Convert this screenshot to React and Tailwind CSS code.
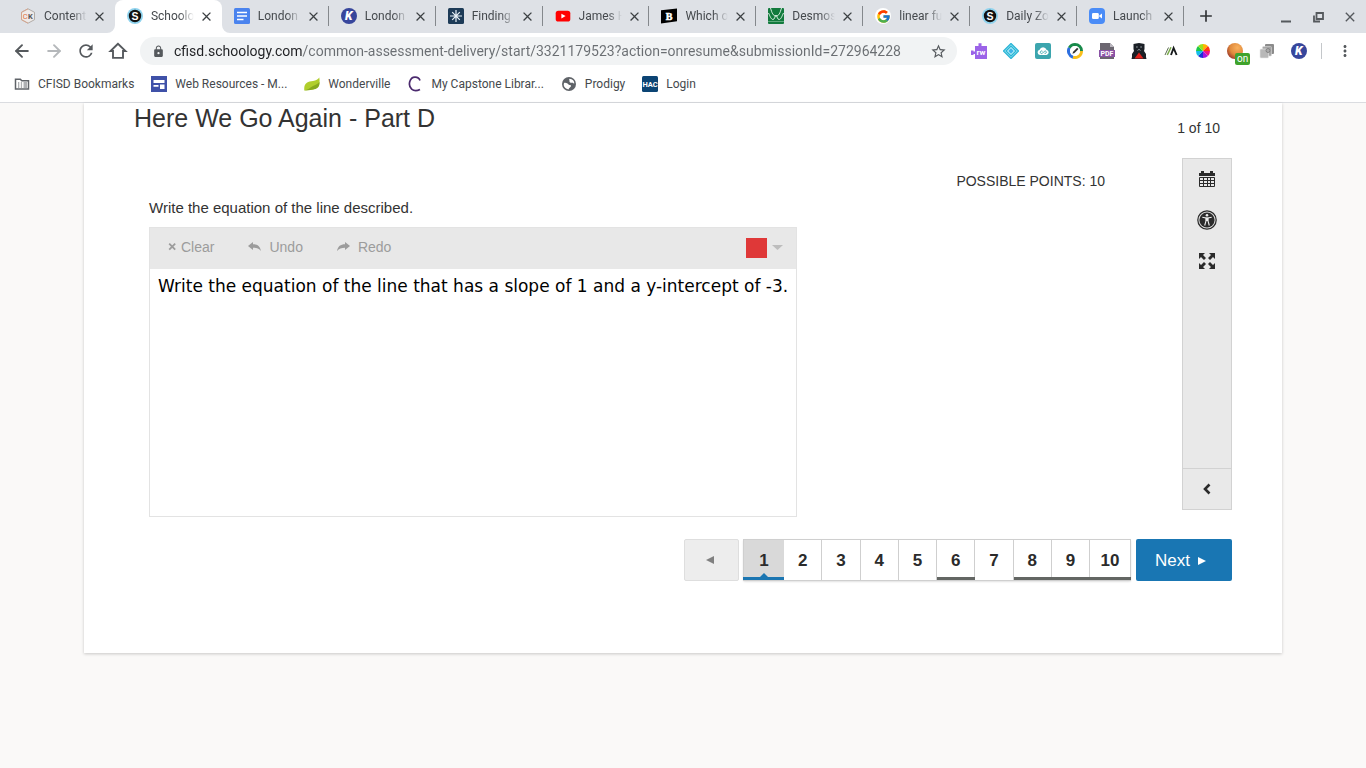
import React from "react";
import { ArrowLeft, ArrowRight } from "lucide-react";
import { MdRefresh, MdLock, MdStarBorder, MdClose, MdAdd, MdMoreVert } from "react-icons/md";
import { FcGoogle } from "react-icons/fc";

const SANS = "Roboto, 'Liberation Sans', sans-serif";

function Glyph({ size = 16, children }) {
  return (
    <svg width={size} height={size} viewBox="0 0 16 16" className="block shrink-0" aria-hidden="true">
      {children}
    </svg>
  );
}

const Ck = () => (
  <Glyph>
    <path d="M8 .8 14.500 4.300v7.400L8 15.200 1.500 11.700V4.300z" fill="#eeeae8" stroke="#a39c97" strokeWidth=".8" />
    <path d="M8 15.200 1.500 11.700V4.300L8 .8" fill="none" stroke="#e0a184" strokeWidth=".8" />
    <text x="2.800" y="10.800" fontSize="7.500" fontFamily={SANS} fill="#e2703a">C</text>
    <text x="8" y="10.800" fontSize="7.500" fontWeight="700" fontFamily={SANS} fill="#555">K</text>
  </Glyph>
);

const SchoologyMark = () => (
  <Glyph>
    <circle cx="8" cy="8" r="8" fill="#8fd3ee" />
    <circle cx="8" cy="8" r="6.200" fill="#111" />
    <text x="8" y="11.700" fontSize="10.500" fontWeight="700" textAnchor="middle" fontFamily="Liberation Sans, sans-serif" fill="#fff">S</text>
  </Glyph>
);

const DocsMark = () => (
  <Glyph>
    <rect width="16" height="16" rx="1.500" fill="#4a83ee" />
    <path d="M3 4.500h10M3 8h10M3 11.500h6.500" stroke="#fff" strokeWidth="1.600" />
  </Glyph>
);

const KamiArt = () => (
  <>
    <circle cx="8" cy="8" r="8" fill="#37469c" />
    <text x="7.800" y="12.200" fontSize="12" fontWeight="900" fontStyle="italic" textAnchor="middle" fontFamily={SANS} fill="#fff">K</text>
  </>
);

const KamiMark = () => <Glyph><KamiArt /></Glyph>;

const AsteriskMark = () => (
  <Glyph>
    <rect width="16" height="16" rx="1.500" fill="#1d3b57" />
    <path d="M8 2v12M2 8h12M4.200 4.200l7.600 7.600M11.800 4.200l-7.600 7.600" stroke="#e8f1f7" strokeWidth="1.200" />
  </Glyph>
);

const YoutubeMark = () => (
  <Glyph>
    <rect x=".7" y="2.700" width="14.600" height="10.800" rx="2.600" fill="#f00" />
    <path d="M6.400 5.700v4.800l4.200-2.400z" fill="#fff" />
  </Glyph>
);

const BrainlyMark = () => (
  <Glyph>
    <path d="M0 2.200 16 .5v12.700L0 15.500z" fill="#000" />
    <text x="8" y="11.800" fontSize="10" fontWeight="700" textAnchor="middle" fontFamily="Liberation Serif, serif" fill="#fff" stroke="#fff" strokeWidth=".5">B</text>
  </Glyph>
);

const DesmosMark = () => (
  <Glyph>
    <rect width="16" height="16" rx="1" fill="#127a3d" />
    <path d="M.5 5C2 8 3 11.500 5 11.500S7 7 8 7s1 4.500 3 4.500S14 8 15.500 5M2.500 0C4 5 5 8 8 8s4-3 5.500-8" fill="none" stroke="#d9f0e1" strokeWidth="1" />
    <path d="M0 13.500h16" stroke="#7fbf98" strokeWidth=".7" />
  </Glyph>
);

const GoogleMark = () => (
  <span className="flex size-4 items-center justify-center rounded-full bg-white"><FcGoogle size={15} /></span>
);

const ZoomMark = () => (
  <Glyph>
    <rect width="16" height="16" rx="4" fill="#4a8cf7" />
    <rect x="3" y="5" width="6.800" height="6" rx="1.300" fill="#fff" />
    <path d="m10.300 7.400 2.700-2v5.200l-2.700-2z" fill="#fff" />
  </Glyph>
);

const TABS = [
  { title: "Content", Icon: Ck },
  { title: "Schoology", Icon: SchoologyMark, active: true },
  { title: "London", Icon: DocsMark },
  { title: "London", Icon: KamiMark },
  { title: "Finding", Icon: AsteriskMark },
  { title: "James H", Icon: YoutubeMark },
  { title: "Which of", Icon: BrainlyMark },
  { title: "Desmos", Icon: DesmosMark },
  { title: "linear fun", Icon: GoogleMark },
  { title: "Daily Zoom", Icon: SchoologyMark },
  { title: "Launch", Icon: ZoomMark },
];

function Tab({ title, Icon, active, divider }) {
  return (
    <div className={active ? "relative flex min-w-0 flex-1 items-center rounded-t-lg bg-white pb-px pl-3" : "relative flex min-w-0 flex-1 items-center pb-px pl-3"}>
      <Icon />
      <button
        type="button"
        role="tab"
        aria-selected={!!active}
        className="ml-2 w-[43px] overflow-hidden text-left text-[12px] leading-5 whitespace-nowrap text-[#45494d] [mask-image:linear-gradient(90deg,#000_65%,transparent)]"
      >
        {title}
      </button>
      <button type="button" aria-label={`Close ${title}`} className="ml-[5px] text-[#3c4043]">
        <MdClose size={15} />
      </button>
      {divider && <span className="absolute top-[6px] right-0 h-5 w-px bg-[#84888c]" />}
      {active && (
        <>
          <svg width="8" height="8" viewBox="0 0 8 8" className="absolute bottom-0 -left-2" aria-hidden="true"><path d="M8 0v8H0a8 8 0 0 0 8-8z" fill="#fff" /></svg>
          <svg width="8" height="8" viewBox="0 0 8 8" className="absolute -right-2 bottom-0" aria-hidden="true"><path d="M0 0v8h8a8 8 0 0 1-8-8z" fill="#fff" /></svg>
        </>
      )}
    </div>
  );
}

function TabStrip() {
  return (
    <div className="flex h-[33px] bg-[#dee1e6] pl-2">
      <div role="tablist" className="flex max-w-[1176px] min-w-0 flex-1">
        {TABS.map((t, i) => <Tab key={i} {...t} divider={i > 1} />)}
      </div>
      <button type="button" aria-label="New tab" className="ml-3 pb-px text-[#303336]"><MdAdd size={20} /></button>
      <div className="ml-auto flex items-center gap-4 pr-2 text-[#55595d]">
        <button type="button" aria-label="Minimize">
          <Glyph><path d="M3 12.500h10" stroke="currentColor" strokeWidth="2" /></Glyph>
        </button>
        <button type="button" aria-label="Restore">
          <Glyph><path d="M6.500 4h6.500v6H6.500zM4 6.500v6h6" fill="none" stroke="currentColor" strokeWidth="1.800" /></Glyph>
        </button>
        <button type="button" aria-label="Close window"><MdClose size={16} /></button>
      </div>
    </div>
  );
}

const EXTENSIONS = [
  { name: "Read&Write", art: (
    <>
      <path d="M4 3h3.500V.3h3V3H16v13H4v-5H2.500v1H0V7.500h2.500v1H4z" fill="#9b63e8" />
      <text x="10" y="12" fontSize="8" fontWeight="700" textAnchor="middle" fontFamily={SANS} fill="#fff">rw</text>
    </>
  ) },
  { name: "Diamond", art: (
    <>
      <path d="m8 .5 7.500 7.500L8 15.500.5 8z" fill="#b8f0f8" stroke="#2bb5d6" strokeWidth="1.300" strokeLinejoin="round" />
      <path d="m8 3 5 5-5 5-5-5z" fill="none" stroke="#2bb5d6" strokeWidth="1.300" />
      <path d="m8 5.300 2.700 2.700L8 10.700 5.300 8z" fill="#3fb4e8" />
    </>
  ) },
  { name: "Cloud", art: (
    <>
      <rect width="16" height="16" rx="2" fill="#3ca5ae" />
      <path d="M5 12a2.700 2.700 0 0 1-.4-5.300 3.600 3.600 0 0 1 6.900 0A2.700 2.700 0 0 1 11.500 12z" fill="#fff" />
      <path d="M7.500 8.300a1.300 1.300 0 1 0 0 1.900l2-2a1.200 1.200 0 1 1 0 2" fill="none" stroke="#3ca5ae" strokeWidth=".9" />
    </>
  ) },
  { name: "Compass", art: (
    <>
      <path d="M8 1.500A6.500 6.500 0 0 1 14.500 8" fill="none" stroke="#188a4a" strokeWidth="3" />
      <path d="M14.500 8A6.500 6.500 0 0 1 6 14.200" fill="none" stroke="#f9bf1c" strokeWidth="3" />
      <path d="M6 14.200A6.500 6.500 0 0 1 2.400 4.700" fill="none" stroke="#2d6fe0" strokeWidth="3" />
      <path d="M2.400 4.700A6.500 6.500 0 0 1 8 1.500" fill="none" stroke="#188a4a" strokeWidth="3" />
      <circle cx="8" cy="8" r="5" fill="#fff" />
      <path d="m5.500 10.800.6-2.100 4-4 1.400 1.400-4 4z" fill="#333" />
    </>
  ) },
  { name: "PDF", art: (
    <>
      <path d="M1 0h10l4 4v12H1z" fill="#6b6670" />
      <path d="M11 0v4h4z" fill="#bbb7bf" />
      <rect y="7" width="16" height="7" fill="#8a52a5" />
      <text x="8" y="13" fontSize="7" fontWeight="700" textAnchor="middle" fontFamily={SANS} fill="#fff">PDF</text>
    </>
  ) },
  { name: "Reader", art: (
    <>
      <path d="M2.500 1 5 .5 8 0l3 .5 2.500.5v5l-.5 2 2 3v3l.5 2H.5L1 14v-3l2-3-.5-2z" fill="#1b2026" />
      <path d="m8 9.500 4.500 6h-9z" fill="#e3221c" />
      <path d="M5 4h1.800M9.200 4H11M6.500 7.500 8 6.300l1.500 1.200" stroke="#aab2b8" strokeWidth=".8" fill="none" />
    </>
  ) },
  { name: "Peaks", art: (
    <>
      <path d="M2 12 5.500 4.500" stroke="#5c6b52" strokeWidth="1" />
      <path d="M4.300 12 8 4.200" stroke="#76a845" strokeWidth="1.500" />
      <path d="m8 12 2.600-7 3 7" fill="none" stroke="#171a1c" strokeWidth="1.900" />
    </>
  ) },
  { name: "Color wheel", art: (
    <>
      <path d="M8 8V1a7 7 0 0 1 5 2z" fill="#ffb400" />
      <path d="m8 8 5-5a7 7 0 0 1 2 5z" fill="#ff3a14" />
      <path d="M8 8h7a7 7 0 0 1-2 5z" fill="#f0138a" />
      <path d="m8 8 5 5a7 7 0 0 1-5 2z" fill="#a414e0" />
      <path d="M8 8v7a7 7 0 0 1-5-2z" fill="#1f2fd8" />
      <path d="m8 8-5 5a7 7 0 0 1-2-5z" fill="#14bde8" />
      <path d="M8 8H1a7 7 0 0 1 2-5z" fill="#1cc84a" />
      <path d="M8 8 3 3a7 7 0 0 1 5-2z" fill="#9be01c" />
    </>
  ) },
  { name: "Toggle", badge: "on", art: (
    <>
      <defs>
        <radialGradient id="orb" cx="65%" cy="30%" r="75%">
          <stop offset="0" stopColor="#f9b05c" /><stop offset=".6" stopColor="#e08a3c" /><stop offset="1" stopColor="#a13c2a" />
        </radialGradient>
      </defs>
      <circle cx="8" cy="8" r="8" fill="url(#orb)" />
    </>
  ) },
  { name: "Layers", art: (
    <>
      <rect x="6" y="1" width="9" height="10" rx="1" fill="#8b8b8b" />
      <rect x="3.500" y="3.500" width="9" height="9.500" rx="1" fill="#a5a5a5" stroke="#d8d8d8" strokeWidth=".6" />
      <rect x="1" y="6" width="8.500" height="9" rx="1" fill="#b8b8b8" stroke="#e8e8e8" strokeWidth=".6" />
      <circle cx="9" cy="7.500" r="2" fill="#aaa" stroke="#777" strokeWidth=".8" />
    </>
  ) },
  { name: "Kami", art: <KamiArt /> },
];

function Toolbar() {
  return (
    <div className="flex h-9 items-center bg-white pr-3 pl-3 text-[#55595d]">
      <div className="flex items-center gap-3">
        <button type="button" aria-label="Back"><ArrowLeft size={20} strokeWidth={2.300} /></button>
        <button type="button" aria-label="Forward" className="text-[#b5b8bb]"><ArrowRight size={20} strokeWidth={2.300} /></button>
        <button type="button" aria-label="Reload"><MdRefresh size={20} /></button>
        <button type="button" aria-label="Home">
          <Glyph size={20}><path d="M8 2.200 2 8h2v5.500h8V8h2z" fill="none" stroke="currentColor" strokeWidth="1.500" /></Glyph>
        </button>
      </div>
      <div className="ml-3 flex h-7 min-w-0 flex-1 items-center rounded-full bg-[#f1f3f4] pr-[10px] pl-3">
        <MdLock size={13} className="shrink-0" />
        <input
          type="text"
          aria-label="Address"
          defaultValue="cfisd.schoology.com/common-assessment-delivery/start/3321179523?action=onresume&submissionId=272964228"
          className="ml-[9px] min-w-0 flex-1 bg-linear-[90deg,#202124_129px,#6a6e72_129px] bg-clip-text text-[14px] leading-5 text-transparent outline-none"
        />
        <button type="button" aria-label="Bookmark this page"><MdStarBorder size={17} /></button>
      </div>
      <div className="ml-[14px] flex items-center gap-4">
        {EXTENSIONS.map((e) => (
          <button key={e.name} type="button" aria-label={e.name} className="relative">
            <Glyph>{e.art}</Glyph>
            {e.badge && (
              <span className="absolute top-[10px] left-2 rounded-xs bg-[#3fa32c] px-[2px] text-[10px] leading-3 text-white">{e.badge}</span>
            )}
          </button>
        ))}
      </div>
      <span className="ml-[14px] h-4 w-px bg-[#c4c7ca]" />
      <button type="button" aria-label="Menu" className="ml-[14px]"><MdMoreVert size={18} /></button>
    </div>
  );
}

const BOOKMARKS = [
  { label: "CFISD Bookmarks", gap: "mr-[17px]", art: (
    <>
      <path d="M1.500 3.200h4.800l1.500 1.500h6.700v8.300h-13z" fill="none" stroke="#5f6368" strokeWidth="1.500" />
      <path d="M4 7h1.300M4 9h1.300M4 11h1.300M6.800 7h1.300M6.800 9h1.300M6.800 11h1.300M9.500 7H13M9.500 9H13M9.500 11H13" stroke="#5f6368" strokeWidth="1.100" />
    </>
  ) },
  { label: "Web Resources - M...", gap: "mr-[17px]", art: (
    <>
      <rect width="16" height="16" fill="#3f51a8" />
      <path d="M2.500 4h11v3h-11zM2.500 9h5v1.800h-5zM9 8.500h4.500V13H9z" fill="#fff" />
    </>
  ) },
  { label: "Wonderville", gap: "mr-[17px]", art: (
    <>
      <path d="M.3 14.500C-.5 7 4 5.500 9 5c3-.3 5-2 6.300-3.500.8 5.500 0 9-3.500 11S4 14 .3 14.500z" fill="#b0ce2c" />
      <path d="M.3 14.500C4 14 6 11.500 9 10s5.500-2.500 6.600-4c0 4-1.300 6-4.100 7S4 14 .3 14.500z" fill="#86a91d" />
    </>
  ) },
  { label: "My Capstone Librar...", gap: "mr-[17px]", art: (
    <path d="M13 4.500C11.500 0 4.500-.5 2.800 5.500S6 17 13 13.500" fill="none" stroke="#4b2a6e" strokeWidth="1.700" />
  ) },
  { label: "Prodigy", gap: "mr-[17px]", art: (
    <>
      <circle cx="8" cy="8" r="7" fill="#5f6368" />
      <path d="M3 7c2-.5 3.500.5 4.500 1.500s2.500 0 2.500 1.500-2 1.300-2.500 3.500C4.500 13 3 11 2.700 9zM8.500 2.700C7.500 4 9 4.300 8.500 5.300s1 1.700 2.500 1.500 1.500 1 2.300.7C13.500 5 11.500 3 8.500 2.700z" fill="#fff" />
    </>
  ) },
  { label: "Login", gap: "", art: (
    <>
      <rect width="16" height="16" rx="1.500" fill="#0c4474" />
      <text x="8" y="10.800" fontSize="7.500" fontWeight="700" textAnchor="middle" fontFamily="Roboto, sans-serif" fill="#fff">HAC</text>
    </>
  ) },
];

function Bookmarks() {
  return (
    <nav aria-label="Bookmarks" className="flex h-[34px] items-center border-b border-[#dadce0] bg-white pb-1 pl-[14px]">
      {BOOKMARKS.map((b) => (
        <a key={b.label} href="#" className={`flex items-center gap-2 text-[12px] leading-5 whitespace-nowrap text-[#45494d] ${b.gap}`}>
          <Glyph>{b.art}</Glyph>
          {b.label}
        </a>
      ))}
    </nav>
  );
}

function Workspace() {
  return (
    <div className="mt-[9px] h-[290px] w-full max-w-[648px] border border-[#e3e3e3] bg-white">
      <div className="flex h-[41px] items-center bg-[#e8e8e8] pb-1 text-[14px] leading-5 text-[#9c9c9c]">
        <button type="button" className="ml-[18px] flex items-center gap-1">
          <svg width="9" height="9" viewBox="0 0 9 9" aria-hidden="true"><path d="m1.200 1.700 6 6M7.200 1.700l-6 6" stroke="currentColor" strokeWidth="1.800" /></svg>
          Clear
        </button>
        <button type="button" className="ml-[34px] flex items-center gap-2">
          <svg width="13" height="10" viewBox="0 0 13 10" aria-hidden="true"><path d="M0 4 5 0v2.300c4.500 0 7 2 8 6.700-2-2.500-4.500-3.200-8-3.200V8z" fill="currentColor" /></svg>
          Undo
        </button>
        <button type="button" className="ml-[34px] flex items-center gap-2">
          <svg width="13" height="10" viewBox="0 0 13 10" aria-hidden="true"><path d="M13 4 8 0v2.300C3.500 2.300 1 4.300 0 9c2-2.500 4.500-3.200 8-3.200V8z" fill="currentColor" /></svg>
          Redo
        </button>
        <button type="button" aria-label="Pen color" className="mr-[13px] ml-auto flex items-center gap-[5px] pt-0.5">
          <span className="block h-5 w-[21px] bg-[#df3838]" />
          <svg width="11" height="5" viewBox="0 0 11 5" aria-hidden="true"><path d="M0 0h11L5.500 5z" fill="#bdbdbd" /></svg>
        </button>
      </div>
      <p className="pt-[5px] pl-2 font-['DejaVu_Sans',sans-serif] text-[17px] leading-6 text-black">
        Write the equation of the line that has a slope of 1 and a y-intercept of -3.
      </p>
    </div>
  );
}

function Tools() {
  const cell = "flex h-[41px] w-full items-center justify-center pb-0.5";
  return (
    <aside className="flex h-[352px] w-[50px] shrink-0 flex-col border border-[#d2d2d2] bg-[#e9e9e9] text-[#2b2b2b]">
      <button type="button" aria-label="Calendar" className={cell}>
        <svg width="18" height="18" viewBox="0 0 18 18" aria-hidden="true">
          <path d="M1 3h2V1h3v2h6V1h3v2h2v3H1z" fill="currentColor" />
          <path d="M1.500 7.500h15v9h-15zM1.500 10.500h15M1.500 13.500h15M5.500 7.500v9M9.500 7.500v9M12.500 7.500v9" fill="none" stroke="currentColor" />
        </svg>
      </button>
      <button type="button" aria-label="Accessibility" className={cell}>
        <svg width="20" height="20" viewBox="0 0 20 20" aria-hidden="true">
          <circle cx="10" cy="10" r="9.200" fill="#dcdcdc" stroke="currentColor" strokeWidth="1.200" />
          <circle cx="10" cy="10" r="7.600" fill="currentColor" />
          <circle cx="10" cy="5.200" r="1.300" fill="#eee" />
          <path d="M5.300 7.300 9 8v3l-1.300 4.500M14.700 7.300 11 8v3l1.300 4.500" fill="none" stroke="#eee" strokeWidth="1.100" />
          <path d="M8.800 7.500h2.400V11H8.800z" fill="#eee" />
        </svg>
      </button>
      <button type="button" aria-label="Full screen" className={cell}>
        <svg width="18" height="18" viewBox="0 0 18 18" aria-hidden="true">
          <path d="M1 1h6L5 3l3 3-2 2-3-3-2 2zM17 1v6l-2-2-3 3-2-2 3-3-2-2zM1 17v-6l2 2 3-3 2 2-3 3 2 2zM17 17h-6l2-2-3-3 2-2 3 3 2-2z" fill="currentColor" />
        </svg>
      </button>
      <button type="button" aria-label="Collapse tools" className="mt-auto flex h-[41px] w-full items-center justify-center border-t border-[#d2d2d2]">
        <svg width="8" height="12" viewBox="0 0 8 12" aria-hidden="true"><path d="M6.500 1.500 2 6l4.500 4.500" fill="none" stroke="currentColor" strokeWidth="2.600" /></svg>
      </button>
    </aside>
  );
}

function PageLink({ n }) {
  const current = n === 1;
  const visited = n === 6 || n >= 8;
  const wide = n === 1 || n === 10;
  return (
    <li className={wide ? "w-[41px]" : "flex-1"}>
      <button
        type="button"
        aria-current={current ? "page" : undefined}
        className={`relative h-full w-full border-y border-[#cfcfcf] pt-0.5 text-[17px] leading-5 font-bold text-[#2b2b2b] ${current ? "border-l bg-[#d9d9d9]" : "border-r bg-white"}`}
      >
        {n}
        {visited && <span className="absolute -right-px bottom-0 left-0 h-[3px] bg-[#636663]" />}
        {current && (
          <>
            <span className="absolute right-0 bottom-0 -left-px h-[3px] bg-[#1b76b2]" />
            <svg width="8" height="4" viewBox="0 0 8 4" className="absolute bottom-[3px] left-4" aria-hidden="true"><path d="m4 0 4 4H0z" fill="#1b76b2" /></svg>
          </>
        )}
      </button>
    </li>
  );
}

function Pager() {
  return (
    <nav aria-label="Questions" className="mt-[22px] flex h-[42px] justify-end">
      <button type="button" aria-label="Previous" className="mr-1 flex w-[55px] items-center justify-center rounded-xs border border-[#dedede] bg-[#ededed] pr-1">
        <svg width="8" height="8" viewBox="0 0 8 8" aria-hidden="true"><path d="M8 0v8L0 4z" fill="#808080" /></svg>
      </button>
      <ol className="mr-[5px] flex w-[388px] rounded-xs shadow-[0_1px_2px_rgba(0,0,0,0.12)]">
        {[1, 2, 3, 4, 5, 6, 7, 8, 9, 10].map((n) => <PageLink key={n} n={n} />)}
      </ol>
      <button type="button" className="flex w-24 items-center gap-2 rounded-xs bg-[#1976b3] pt-0.5 pl-[19px] text-[17px] leading-5 text-white">
        Next
        <svg width="8" height="8" viewBox="0 0 8 8" aria-hidden="true"><path d="M0 0v8l8-4z" fill="currentColor" /></svg>
      </button>
    </nav>
  );
}

export default function App() {
  return (
    <div className="flex min-h-screen flex-col bg-[#faf9f8] font-[Roboto,'Liberation_Sans',sans-serif]">
      <header>
        <TabStrip />
        <Toolbar />
        <Bookmarks />
      </header>
      <main className="mx-21 bg-white px-[50px] pb-[72px] font-['Liberation_Sans',Arial,sans-serif] text-[#333] shadow-[0_1px_3px_rgba(0,0,0,0.2)]">
        <div className="flex h-[55px] items-start justify-between">
          <h1 className="text-[25px] leading-[30px]">Here We Go Again - Part D</h1>
          <span className="pt-[15px] pr-3 text-[14px] leading-5">1 of 10</span>
        </div>
        <div className="flex">
          <section className="min-w-0 flex-1 pt-[13px] pl-[15px]">
            <p className="pr-[77px] text-right text-[14px] leading-5">POSSIBLE POINTS: 10</p>
            <p className="mt-[7px] text-[15px] leading-5">Write the equation of the line described.</p>
            <Workspace />
          </section>
          <Tools />
        </div>
        <Pager />
      </main>
    </div>
  );
}
